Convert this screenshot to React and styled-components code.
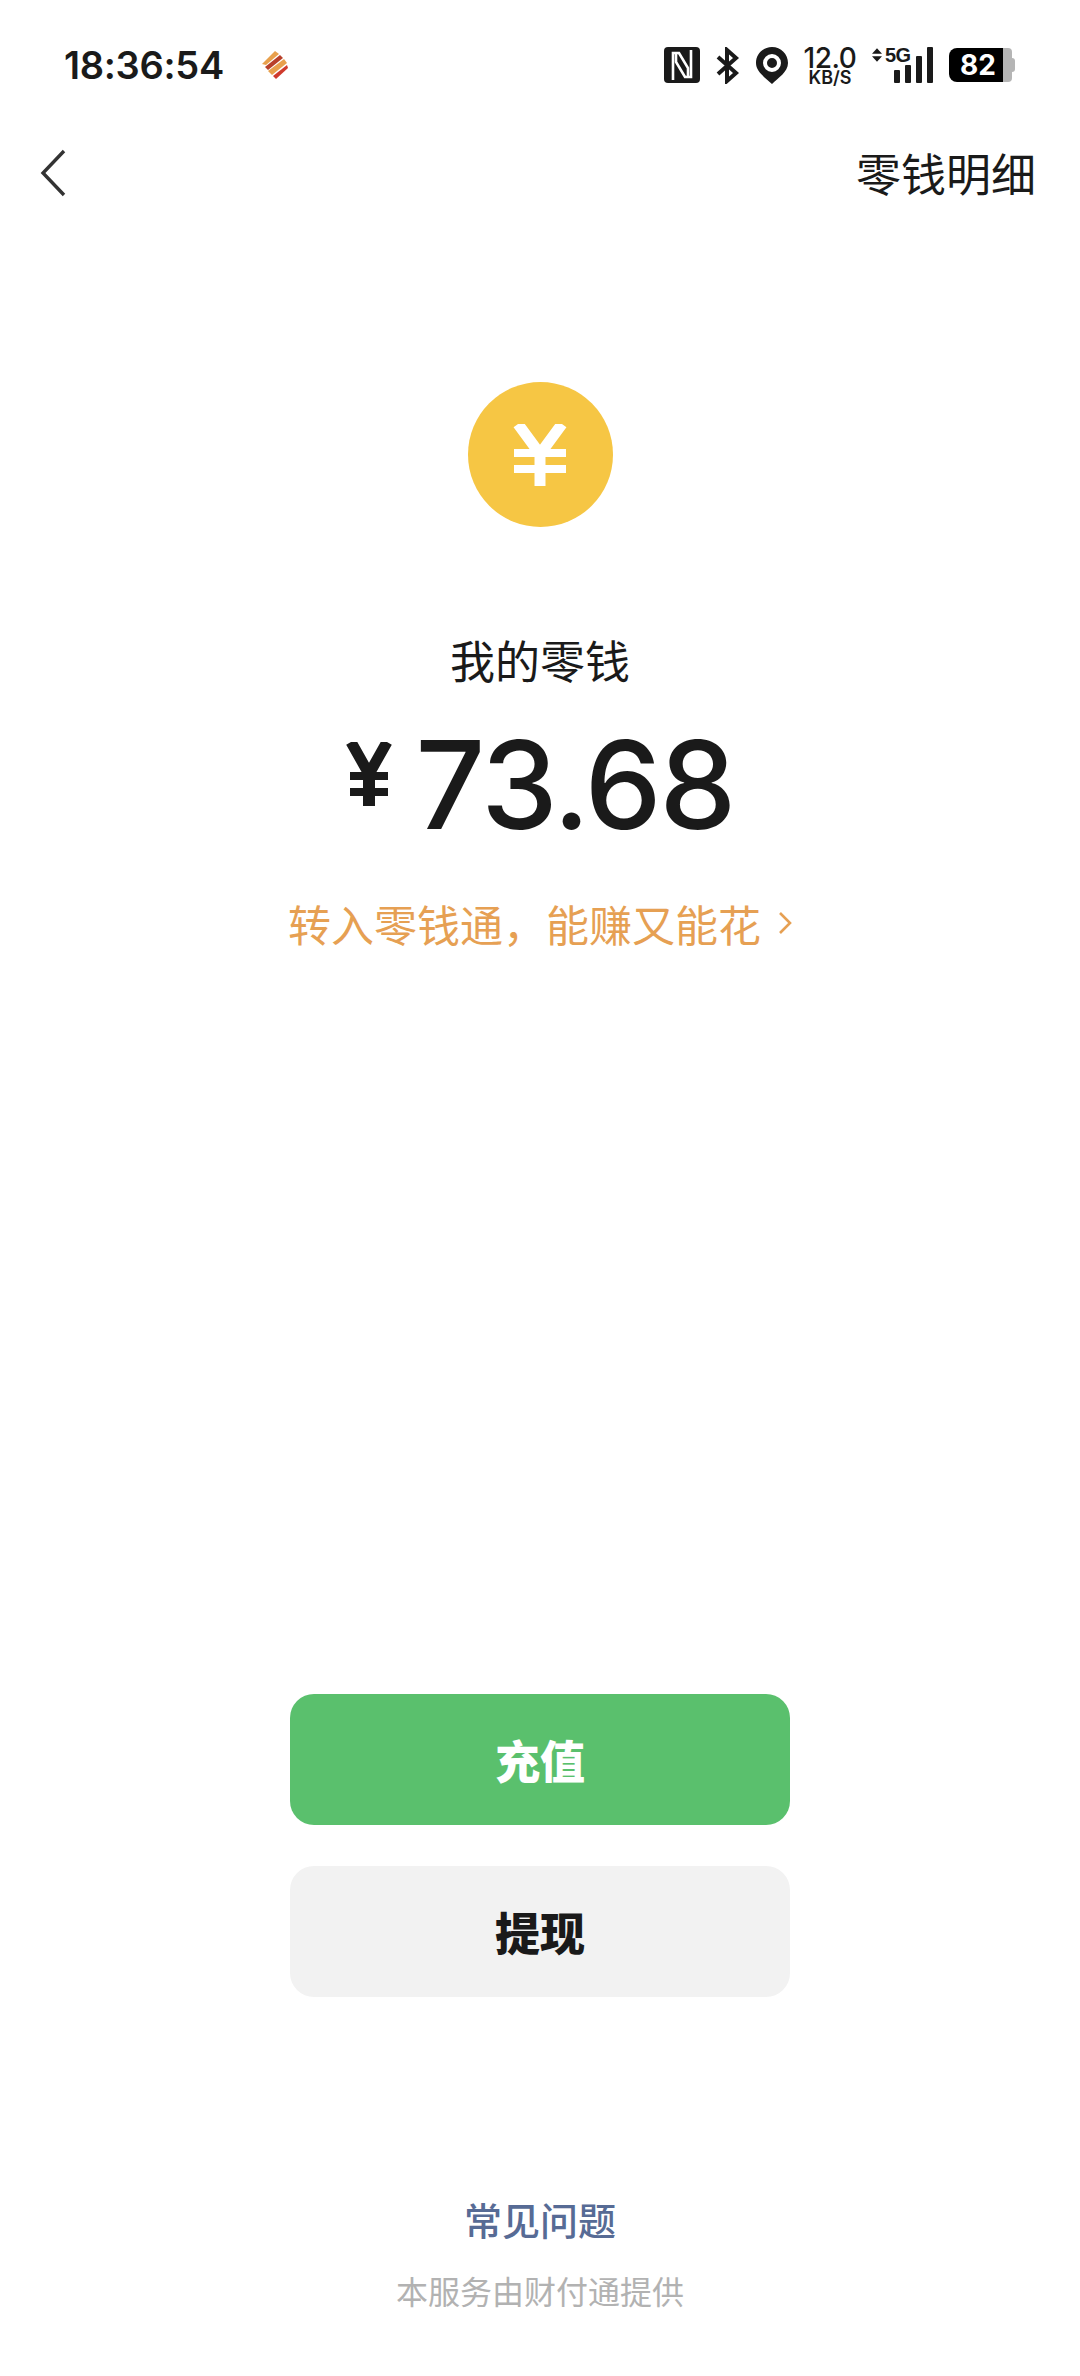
import React from "react";
import styled, { createGlobalStyle } from "styled-components";

const GlobalStyle = createGlobalStyle`
  html, body {
    margin: 0;
    padding: 0;
    background: #fff;
  }
  * {
    box-sizing: border-box;
  }
`;

const cjk = `"Noto Sans CJK SC", "Noto Sans", sans-serif`;

const App = () => {
  return (
    <Page>
      <GlobalStyle />
      <StatusBar>
        <Clock>
          <Time>18:36:54</Time>
          <svg width="28" height="30" viewBox="0 0 28 30">
            <path d="M14 1 L18 4 L5 15 L1 14 Z" fill="#e8a04c" />
            <path d="M19 5 L22 8 L7 20 L4 17 Z" fill="#b8402a" />
            <path d="M23 9 L26 13 L11 25 L7 21 Z" fill="#e8a04c" />
            <path d="M26 15 L27 18 L15 29 L12 26 Z" fill="#cf3a2c" />
          </svg>
        </Clock>
        <StatusIcons>
          <svg width="36" height="36" viewBox="0 0 36 36">
            <rect width="36" height="36" rx="4" fill="#1a1a1a" />
            <path d="M9 33 V6 H15 L24 21 V29" fill="none" stroke="#fff" strokeWidth="2.6" />
            <path d="M27 3 V30 H21 L12 15 V7" fill="none" stroke="#fff" strokeWidth="2.6" />
          </svg>
          <svg width="24" height="37" viewBox="0 0 24 37">
            <path d="M2 10 L20 26 L11 34 V3 L20 11 L2 27" fill="none" stroke="#1a1a1a" strokeWidth="4" />
          </svg>
          <svg width="32" height="37" viewBox="0 0 32 37">
            <path
              fillRule="evenodd"
              fill="#1a1a1a"
              d="M16 0 C7 0 0 7 0 16 C0 25 10 31 16 37 C22 31 32 25 32 16 C32 7 25 0 16 0 Z M16 7 A9 9 0 1 1 16 25 A9 9 0 1 1 16 7 Z M16 11 A5 5 0 1 0 16 21 A5 5 0 1 0 16 11 Z"
            />
          </svg>
          <Speed>
            <SpeedValue>12.0</SpeedValue>
            <SpeedUnit>KB/S</SpeedUnit>
          </Speed>
          <Signal>
            <NetworkRow>
              <svg width="10" height="14" viewBox="0 0 11 15">
                <path d="M5.5 0 L11 6 H0 Z M0 9 H11 L5.5 15 Z" fill="#1a1a1a" />
              </svg>
              <NetworkLabel>5G</NetworkLabel>
            </NetworkRow>
            <Bars>
              {[13, 18, 27, 36].map((h) => (
                <Bar key={h} $height={h} />
              ))}
            </Bars>
          </Signal>
          <Battery>
            <BatteryLevel>82</BatteryLevel>
            <BatteryRest />
            <BatteryCap />
          </Battery>
        </StatusIcons>
      </StatusBar>

      <NavBar>
        <svg width="26" height="48" viewBox="0 0 26 48">
          <path d="M24 2 L3 24 L24 46" fill="none" stroke="#333" strokeWidth="3.4" />
        </svg>
        <NavTitle>零钱明细</NavTitle>
      </NavBar>

      <Coin>
        <svg width="54" height="62" viewBox="0 0 54 62">
          <path d="M5 0 L27 30 L49 0" fill="none" stroke="#fff" strokeWidth="11" />
          <path d="M27 28 V62" fill="none" stroke="#fff" strokeWidth="11" />
          <path d="M1 29 H53 M1 45 H53" fill="none" stroke="#fff" strokeWidth="8" />
        </svg>
      </Coin>
      <BalanceLabel>我的零钱</BalanceLabel>
      <Amount>
        <svg width="46" height="64" viewBox="0 0 46 64">
          <path d="M5 0 L23 32 L41 0" fill="none" stroke="#1a1a1a" strokeWidth="11" />
          <path d="M23 30 V64" fill="none" stroke="#1a1a1a" strokeWidth="12" />
          <path d="M4 34 H42 M4 50 H42" fill="none" stroke="#1a1a1a" strokeWidth="8" />
        </svg>
        <AmountValue>73.68</AmountValue>
      </Amount>
      <Promo>
        <span>转入零钱通，能赚又能花</span>
        <svg width="14" height="24" viewBox="0 0 14 24">
          <path d="M2 2 L12 12 L2 22" fill="none" stroke="#e6a053" strokeWidth="2.6" />
        </svg>
      </Promo>

      <Actions>
        <ActionButton $primary>充值</ActionButton>
        <ActionButton>提现</ActionButton>
      </Actions>

      <Footer>
        <FaqLink>常见问题</FaqLink>
        <Provider>本服务由财付通提供</Provider>
      </Footer>
    </Page>
  );
};

const Page = styled.div`
  width: 1080px;
  height: 2376px;
  display: flex;
  flex-direction: column;
  align-items: center;
  overflow: hidden;
  background: #fff;
  color: #1a1a1a;
  font-family: ${cjk};
`;
const StatusBar = styled.div`
  width: 100%;
  height: 46px;
  margin-top: 42px;
  padding: 0 65px 0 64px;
  display: flex;
  justify-content: space-between;
  align-items: center;
`;
const Clock = styled.div`
  display: flex;
  align-items: center;
  gap: 37px;
`;
const Time = styled.span`
  font-family: Inter, "Liberation Sans", sans-serif;
  font-size: 38px;
  font-weight: 600;
  letter-spacing: -0.3px;
`;
const StatusIcons = styled.div`
  display: flex;
  align-items: center;
  gap: 16px;
`;
const Speed = styled.div`
  width: 52px;
  display: flex;
  flex-direction: column;
  align-items: center;
  font-family: Inter, "Liberation Sans", sans-serif;
  color: #1a1a1a;
`;
const SpeedValue = styled.span`
  font-size: 28px;
  font-weight: 500;
  line-height: 24px;
  letter-spacing: -0.4px;
`;
const SpeedUnit = styled.span`
  font-size: 18px;
  font-weight: 600;
  line-height: 15px;
`;
const Signal = styled.div`
  width: 61px;
  height: 36px;
  display: flex;
  align-items: flex-end;
  justify-content: flex-end;
  position: relative;
`;
const NetworkRow = styled.div`
  position: absolute;
  left: 0;
  top: 0;
  display: flex;
  align-items: center;
  gap: 3px;
`;
const NetworkLabel = styled.span`
  font-family: "Liberation Sans", sans-serif;
  font-size: 20px;
  font-weight: 700;
  line-height: 16px;
  letter-spacing: -0.6px;
`;
const Bars = styled.div`
  display: flex;
  align-items: flex-end;
  gap: 5px;
`;
const Bar = styled.div`
  width: 6px;
  height: ${({ $height }) => $height}px;
  background: #1a1a1a;
  border-radius: 1px;
`;
const Battery = styled.div`
  display: flex;
  align-items: center;
  height: 34px;
`;
const BatteryLevel = styled.div`
  width: 54px;
  height: 34px;
  padding-left: 4px;
  background: #000;
  border-radius: 8px 0 0 8px;
  color: #fff;
  font-family: Inter, "Liberation Sans", sans-serif;
  font-size: 28px;
  font-weight: 700;
  line-height: 34px;
  text-align: center;
`;
const BatteryRest = styled.div`
  width: 9px;
  height: 34px;
  background: #b5b5b5;
  border-radius: 0 4px 4px 0;
`;
const BatteryCap = styled.div`
  width: 3px;
  height: 14px;
  background: #b5b5b5;
  border-radius: 0 3px 3px 0;
`;
const NavBar = styled.div`
  width: 100%;
  height: 64px;
  margin-top: 53px;
  padding: 0 44px 0 40px;
  display: flex;
  justify-content: space-between;
  align-items: center;
`;
const NavTitle = styled.span`
  font-size: 45px;
  font-weight: 400;
  line-height: 64px;
  color: #1a1a1a;
`;
const Coin = styled.div`
  width: 145px;
  height: 145px;
  margin-top: 177px;
  border-radius: 50%;
  background: #f6c644;
  display: flex;
  align-items: center;
  justify-content: center;
`;
const BalanceLabel = styled.div`
  margin-top: 101px;
  font-size: 45px;
  font-weight: 400;
  line-height: 64px;
`;
const Amount = styled.div`
  margin-top: 33px;
  height: 120px;
  display: flex;
  align-items: flex-start;
  gap: 24px;
  svg {
    margin-top: 17px;
  }
`;
const AmountValue = styled.span`
  font-family: Inter, "Liberation Sans", sans-serif;
  font-size: 122px;
  font-weight: 500;
  line-height: 120px;
  letter-spacing: -2px;
`;
const Promo = styled.div`
  margin-top: 48px;
  display: flex;
  align-items: center;
  gap: 17px;
  color: #e6a053;
  font-size: 43px;
  font-weight: 400;
  line-height: 60px;
`;
const Actions = styled.div`
  margin-top: 741px;
  width: 500px;
  display: flex;
  flex-direction: column;
  gap: 41px;
`;
const ActionButton = styled.button`
  height: 131px;
  border: none;
  border-radius: 24px;
  background: ${({ $primary }) => ($primary ? "#5ac06d" : "#f2f2f2")};
  color: ${({ $primary }) => ($primary ? "#fff" : "#1a1a1a")};
  font-family: ${cjk};
  font-size: 45px;
  font-weight: 900;
`;
const Footer = styled.div`
  margin-top: 197px;
  display: flex;
  flex-direction: column;
  align-items: center;
  gap: 23px;
`;
const FaqLink = styled.div`
  color: #576b95;
  font-size: 38px;
  font-weight: 500;
  line-height: 50px;
`;
const Provider = styled.div`
  color: #b2b2b2;
  font-size: 32px;
  font-weight: 400;
  line-height: 46px;
`;

export default App;
